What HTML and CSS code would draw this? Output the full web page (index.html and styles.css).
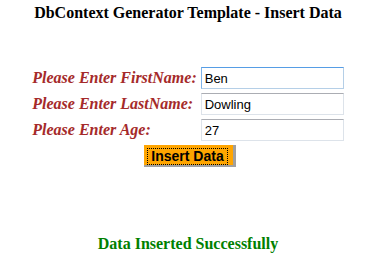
FILE: index.html
```html
<!DOCTYPE html>
<html lang="en">
<head>
    <meta charset="UTF-8">
    <title>DbContext Generator Template - Insert Data</title>
    <link rel="stylesheet" href="styles.css">
</head>
<body>
    <h3 class="title">DbContext Generator Template - Insert Data</h3>

    <table class="form-table">
        <tr>
            <td class="label">Please Enter FirstName:</td>
            <td><input type="text" class="field focused" value="Ben"></td>
        </tr>
        <tr>
            <td class="label">Please Enter LastName:</td>
            <td><input type="text" class="field" value="Dowling"></td>
        </tr>
        <tr>
            <td class="label">Please Enter Age:</td>
            <td><input type="text" class="field" value="27"></td>
        </tr>
        <tr>
            <td colspan="2" class="actions">
                <button class="insert-btn"><span class="focus-ring">Insert Data</span></button>
            </td>
        </tr>
    </table>

    <p class="message">Data Inserted Successfully</p>
</body>
</html>
```

FILE: styles.css
```css
body {
    margin: 0 8px 0 13px;
    font-family: "Liberation Serif", "Times New Roman", serif;
    background: #fff;
}
.title {
    margin: 4px 0 0;
    line-height: 18px;
    text-align: center;
    font-size: 16px;
    color: #000;
}
.form-table {
    margin: 42px auto 0;
    border-collapse: separate;
    border-spacing: 2px;
}
.label {
    color: #a52a2a;
    font-style: italic;
    font-weight: bold;
    font-size: 16px;
    padding: 1px;
    white-space: nowrap;
}
.form-table td {
    padding: 1px;
}
.field {
    box-sizing: border-box;
    display: block;
    width: 143px;
    height: 22px;
    padding: 1px 3px;
    margin: 0;
    border: 1px solid #dde3ea;
    border-top-color: #abadb3;
    font-family: "Liberation Sans", Arial, sans-serif;
    font-size: 13px;
    color: #000;
}
.field.focused {
    border-color: #b5cfe7;
    border-top-color: #569de5;
    border-left-color: #7eb4ea;
}
.form-table .actions {
    text-align: center;
    padding: 0;
}
.insert-btn {
    background: #ffa500;
    border: none;
    border-right: 3px solid #a0a0a0;
    border-bottom: 2px solid #a0a0a0;
    padding: 3px 5px 0 3px;
    margin: 1px 0 0 4px;
    font-family: "Liberation Sans", Arial, sans-serif;
    font-size: 14px;
    font-weight: bold;
    color: #000;
    vertical-align: top;
}
.focus-ring {
    display: block;
    border: 1px dotted #000;
    padding: 0 3px;
    line-height: 15px;
}
.message {
    margin: 66px 0 0;
    line-height: 18px;
    text-align: center;
    color: #008000;
    font-weight: bold;
    font-size: 16px;
}
```
